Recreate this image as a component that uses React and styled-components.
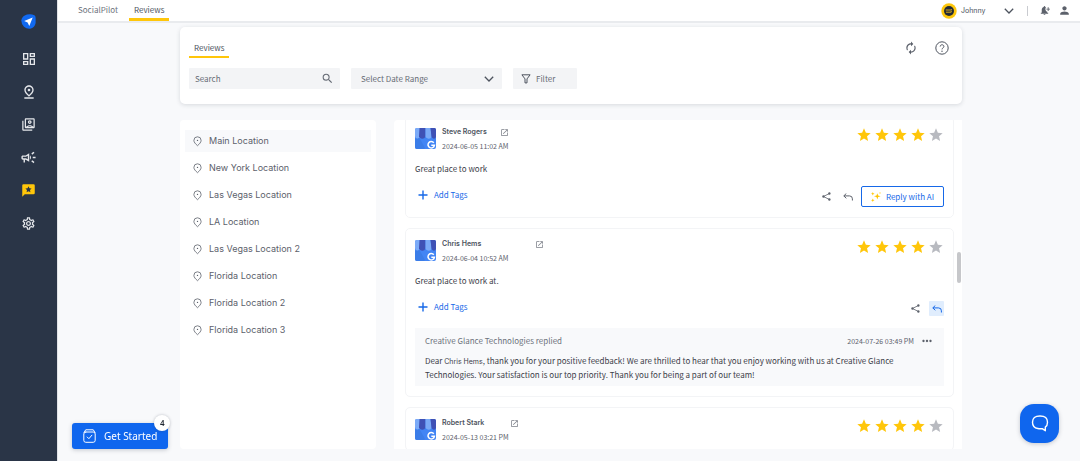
import styled, { createGlobalStyle } from 'styled-components';
import {
  MdOutlineDashboard,
  MdOutlinePinDrop,
  MdOutlineSwitchAccount,
  MdOutlineCampaign,
  MdOutlineSettings,
  MdNotificationAdd,
  MdPerson,
  MdAutorenew,
  MdStar,
  MdMoreHoriz,
  MdOpenInNew,
  MdSearch,
} from 'react-icons/md';

const ReviewsIcon = ({ size }) => (
  <svg width={size} height={size} viewBox="0 0 24 24" aria-hidden="true">
    <path d="M4 2h16q2 0 2 2v12q0 2-2 2H6l-4 4V4q0-2 2-2z" fill="currentColor" />
    <path d="m12 5.200 1.500 3.200 3.500.4-2.600 2.400.7 3.500-3.100-1.700-3.100 1.700.7-3.500L7 8.800l3.500-.4z" fill="#2a3547" />
  </svg>
);

const navItems = [
  { label: 'Dashboard', icon: MdOutlineDashboard, size: 16 },
  { label: 'Locations', icon: MdOutlinePinDrop, size: 16 },
  { label: 'Media', icon: MdOutlineSwitchAccount, size: 15 },
  { label: 'Campaigns', icon: MdOutlineCampaign, size: 17 },
  { label: 'Reviews', icon: ReviewsIcon, size: 15, active: true },
  { label: 'Settings', icon: MdOutlineSettings, size: 15 },
];

const locations = [
  'Main Location',
  'New York Location',
  'Las Vegas Location',
  'LA Location',
  'Las Vegas Location 2',
  'Florida Location',
  'Florida Location 2',
  'Florida Location 3',
];

const reviews = [
  {
    name: 'Steve Rogers',
    nameWidth: 58,
    date: '2024-06-05 11:02 AM',
    text: 'Great place to work',
    rating: 4,
  },
  {
    name: 'Chris Hems',
    nameWidth: 93,
    date: '2024-06-04 10:52 AM',
    text: 'Great place to work at.',
    rating: 4,
    reply: {
      author: 'Creative Glance Technologies replied',
      date: '2024-07-26 03:49 PM',
      text: ', thank you for your positive feedback! We are thrilled to hear that you enjoy working with us at Creative Glance Technologies. Your satisfaction is our top priority. Thank you for being a part of our team!',
    },
  },
  {
    name: 'Robert Stark',
    nameWidth: 68,
    date: '2024-05-13 03:21 PM',
    rating: 4,
  },
];

const BrandIcon = () => (
  <svg width="15" height="15" viewBox="0 0 15 15" aria-hidden="true">
    <path d="M6 .6Q10 -.4 13.400 1.300Q14.600 2 14.600 4V9Q14 13.500 9 14.700Q5.500 15 3 12.800Q.3 10 .3 6.500Q.8 2.300 6 .6Z" fill="#1169f0" />
    <path d="M11.700 3.400 3.200 6.900l3.400 1.500 1.700 3.500z" fill="#fff" />
  </svg>
);

const PinIcon = () => (
  <svg width="9" height="11" viewBox="0 0 9 11" fill="none" stroke="#5c616b" strokeWidth=".8" aria-hidden="true">
    <path d="M4.500 9.700C2.500 7.900.9 6.300.9 4.400a3.600 3.600 0 0 1 7.200 0c0 1.900-1.600 3.500-3.600 5.300Z" />
    <circle cx="4.500" cy="4.400" r=".7" fill="#5c616b" stroke="none" />
  </svg>
);

const ChevronIcon = () => (
  <svg width="10" height="6" viewBox="0 0 10 6" fill="none" stroke="#4d535e" strokeWidth="1.300" aria-hidden="true">
    <path d="M.8.8 5 5 9.200.8" />
  </svg>
);

const FunnelIcon = () => (
  <svg width="10" height="10" viewBox="0 0 10 10" fill="none" stroke="#4d535e" strokeWidth="1" strokeLinejoin="round" aria-hidden="true">
    <path d="M.9.8h8.200L6 4.900v4H4v-4z" />
  </svg>
);

const HelpIcon = () => (
  <svg width="14" height="14" viewBox="0 0 14 14" fill="none" stroke="#4d535e" aria-hidden="true">
    <circle cx="7" cy="7" r="6.200" strokeWidth="1" />
    <path d="M5.200 5.500c0-2.300 3.700-2.300 3.700 0 0 1.400-1.900 1.400-1.900 2.900" strokeWidth="1" />
    <circle cx="7" cy="10.200" r=".7" fill="#4d535e" stroke="none" />
  </svg>
);

const ShareIcon = () => (
  <svg width="9" height="9" viewBox="0 0 10 10" aria-hidden="true">
    <path d="M8.200 1.700 1.600 5l6.600 3.300" fill="none" stroke="currentColor" strokeWidth=".9" />
    <g fill="currentColor">
      <circle cx="8.200" cy="1.700" r="1.300" />
      <circle cx="1.600" cy="5" r="1.300" />
      <circle cx="8.200" cy="8.300" r="1.300" />
    </g>
  </svg>
);

const ReplyIcon = () => (
  <svg width="10" height="8" viewBox="0 0 10 8" fill="none" stroke="currentColor" strokeWidth="1" aria-hidden="true">
    <path d="M3.300.5.8 2.900l2.500 2.400M.9 2.900h5.600q2.900 0 2.900 2.900v1.700" />
  </svg>
);

const PlusIcon = () => (
  <svg width="10" height="10" viewBox="0 0 10 10" stroke="#1668e8" strokeWidth="1.400" aria-hidden="true">
    <path d="M5 .5v9M.5 5h9" />
  </svg>
);

const WandIcon = () => (
  <svg width="10" height="10" viewBox="0 0 10 10" fill="#ffc400" aria-hidden="true">
    <path d="M6.300 1.200 7.100 3.500 9.600 4.300 7.100 5.100 6.300 7.400 5.500 5.100 3 4.300 5.500 3.500z" />
    <path d="M1.800 0l.5 1.200 1.200.5-1.200.5-.5 1.200-.5-1.200L0 1.700l1.300-.5zM1.800 6.500l.5 1.200 1.200.5-1.200.5-.5 1.200-.5-1.200L0 8.200l1.300-.5zM9 0l.3.700.7.300-.7.300L9 2l-.3-.7L8 1l.7-.3z" />
  </svg>
);

const StoreIcon = () => (
  <svg width="21" height="21" viewBox="0 0 21 21" aria-hidden="true">
    <rect width="21" height="21" rx="2" fill="#4285f4" />
    <path d="M0 11 4 9l6 11-1 1H2q-2 0-2-2z" fill="#3b7de8" />
    <path d="M1.500 0H5v8.500Q4 11 2 10.500 0 10 0 8V1.500Q0 0 1.500 0Z" fill="#7baaf7" />
    <path d="M4.500 0H10.500v8.500Q9.500 11 7 10.800 4.700 10.500 4 8.500Z" fill="#3f51b5" />
    <path d="M10.500 0H15.500l1 8.500Q16 11 13.500 10.800 11 10.500 10.500 8.500Z" fill="#7baaf7" />
    <path d="M15.500 0H19.500Q21 0 21 1.500V9Q20.500 10.800 18.800 10.700 17 10.500 16.500 8.500Z" fill="#3f51b5" />
    <path d="M18.800 14.800a3.200 3.200 0 1 0 .6 2.500H16.300" fill="none" stroke="#fff" strokeWidth="1.500" />
  </svg>
);

const BeeIcon = () => (
  <svg width="16" height="16" viewBox="0 0 16 16" aria-hidden="true">
    <circle cx="8" cy="8" r="7.700" fill="#fdc70c" />
    <circle cx="8" cy="8" r="5" fill="#232b36" />
    <path d="M4.800 7h5l1-1M5 9.200h5.200V7.500" fill="none" stroke="#e9b51a" strokeWidth=".9" />
  </svg>
);

const ChecklistIcon = () => (
  <svg width="13" height="14" viewBox="0 0 13 14" fill="none" stroke="#fff" strokeWidth="1" strokeLinecap="round" aria-hidden="true">
    <path d="M1 3.600 2.700.8h7.600L12 3.600" />
    <rect x=".8" y="3" width="11.400" height="10.300" rx="2" />
    <path d="m4.200 8 1.700 1.700 3-3.500" />
  </svg>
);

const ChatIcon = () => (
  <svg width="18" height="17" viewBox="0 0 18 17" fill="none" stroke="#fff" strokeWidth="1.400" strokeLinejoin="round" aria-hidden="true">
    <path d="M9 1Q16.500 1 16.500 7.300 16.500 10.700 14.300 12.200V15.700L11.200 13.600Q9 14 6.800 13.500 1.500 12.800 1.500 7.300 1.500 1 9 1Z" />
  </svg>
);

const ReviewItem = ({ review }) => {
  const { name, nameWidth, date, text, rating, reply } = review;

  return (
    <ReviewCard>
      <ReviewHeader>
        <StoreIcon />
        <ReviewMeta>
          <NameRow>
            <ReviewerName $width={nameWidth}>{name}</ReviewerName>
            <IconLink href="#" aria-label={`Open review by ${name}`}>
              <MdOpenInNew size={9} />
            </IconLink>
          </NameRow>
          <ReviewDate>{date}</ReviewDate>
        </ReviewMeta>
        <Stars role="img" aria-label={`${rating} out of 5 stars`}>
          {[1, 2, 3, 4, 5].map((n) => (
            <MdStar key={n} size={16} color={n <= rating ? '#ffc60a' : '#b8bac0'} />
          ))}
        </Stars>
      </ReviewHeader>
      {text && (
        <>
          <ReviewText>{text}</ReviewText>
          <ReviewActions>
            <AddTags type="button">
              <PlusIcon />
              Add Tags
            </AddTags>
            <ActionGroup>
              <ActionButton type="button" aria-label="Share">
                <ShareIcon />
              </ActionButton>
              <ActionButton type="button" aria-label="Reply" $active={Boolean(reply)}>
                <ReplyIcon />
              </ActionButton>
              {!reply && (
                <AiButton type="button">
                  <WandIcon />
                  Reply with AI
                </AiButton>
              )}
            </ActionGroup>
          </ReviewActions>
        </>
      )}
      {reply && (
        <ReplyBox>
          <ReplyHeader>
            <ReplyAuthor>{reply.author}</ReplyAuthor>
            <ReviewDate>{reply.date}</ReviewDate>
            <ActionButton type="button" aria-label="More">
              <MdMoreHoriz size={14} />
            </ActionButton>
          </ReplyHeader>
          <ReplyText>
            Dear <Mention>{name}</Mention>
            {reply.text}
          </ReplyText>
        </ReplyBox>
      )}
    </ReviewCard>
  );
};

const App = () => {
  return (
    <>
      <GlobalStyle />
      <Layout>
        <Sidebar>
          <SideLink href="#" aria-label="Home">
            <BrandIcon />
          </SideLink>
          {navItems.map(({ label, icon: Icon, size, active }) => (
            <SideLink key={label} href="#" aria-label={label} $active={active}>
              <Icon size={size} />
            </SideLink>
          ))}
        </Sidebar>
        <Page>
          <TopBar>
            <TopNav>
              <TabLink href="#">SocialPilot</TabLink>
              <TabLink href="#" $active>Reviews</TabLink>
            </TopNav>
            <UserArea>
              <UserButton type="button">
                <BeeIcon />
                <UserName>Johnny</UserName>
                <ChevronIcon />
              </UserButton>
              <Divider />
              <ActionButton type="button" aria-label="Notifications">
                <MdNotificationAdd size={11} />
              </ActionButton>
              <ActionButton type="button" aria-label="Account">
                <MdPerson size={13} />
              </ActionButton>
            </UserArea>
          </TopBar>
          <Content>
            <Toolbar>
              <ToolbarHeader>
                <SectionTab href="#">Reviews</SectionTab>
                <ToolbarIcons>
                  <ActionButton type="button" aria-label="Refresh">
                    <MdAutorenew size={14} />
                  </ActionButton>
                  <ActionButton type="button" aria-label="Help">
                    <HelpIcon />
                  </ActionButton>
                </ToolbarIcons>
              </ToolbarHeader>
              <Filters>
                <SearchField>
                  <SearchInput type="text" placeholder="Search" aria-label="Search" />
                  <MdSearch size={13} />
                </SearchField>
                <DateField>
                  <DateSelect aria-label="Date range">
                    <option>Select Date Range</option>
                  </DateSelect>
                  <ChevronIcon />
                </DateField>
                <FilterButton type="button">
                  <FunnelIcon />
                  Filter
                </FilterButton>
              </Filters>
            </Toolbar>
            <Panels>
              <LocationList>
                {locations.map((location, index) => (
                  <li key={location}>
                    <LocationButton type="button" $active={index === 0}>
                      <PinIcon />
                      {location}
                    </LocationButton>
                  </li>
                ))}
              </LocationList>
              <ReviewPanel>
                <ReviewList>
                  {reviews.map((review) => (
                    <ReviewItem key={review.name} review={review} />
                  ))}
                </ReviewList>
                <ScrollThumb />
              </ReviewPanel>
            </Panels>
          </Content>
        </Page>
      </Layout>
      <GetStarted type="button">
        <ChecklistIcon />
        Get Started
        <Badge>4</Badge>
      </GetStarted>
      <ChatButton type="button" aria-label="Open chat">
        <ChatIcon />
      </ChatButton>
    </>
  );
};

const GlobalStyle = createGlobalStyle`
  * {
    box-sizing: border-box;
  }

  body {
    margin: 0;
    background: #f8f9fb;
    color: #4d535e;
    font-family: "Noto Sans CJK SC", "Noto Sans", sans-serif;
    font-size: 8px;
    line-height: 14px;
  }

  button, input, select {
    margin: 0;
    padding: 0;
    border: none;
    background: none;
    color: inherit;
    font: inherit;
  }

  button {
    cursor: pointer;
  }

  a {
    color: inherit;
    text-decoration: none;
  }

  svg {
    display: block;
    flex-shrink: 0;
  }
`;

const Layout = styled.div`
  display: flex;
  height: 100vh;
  overflow: hidden;
`;

const Sidebar = styled.nav`
  display: flex;
  flex-direction: column;
  align-items: center;
  gap: 18px;
  width: 57px;
  flex-shrink: 0;
  padding-top: 14px;
  background: #2a3547;
`;

const SideLink = styled.a`
  display: flex;
  align-items: center;
  height: 15px;
  color: ${props => props.$active ? '#ffc60a' : '#e4e6ea'};

  &:first-child {
    margin-bottom: 4px;
  }
`;

const Page = styled.div`
  display: flex;
  flex: 1;
  flex-direction: column;
  min-width: 0;
  border-left: 1px solid #e1e3e7;
`;

const TopBar = styled.header`
  display: flex;
  justify-content: space-between;
  height: 23px;
  flex-shrink: 0;
  padding: 0 8px 0 15px;
  border-bottom: 2px solid #e9ebee;
  background: #fff;
`;

const TopNav = styled.nav`
  display: flex;
  gap: 6px;
`;

const TabLink = styled.a`
  height: 21px;
  padding: 3px 5px 0;
  border-bottom: 3px solid ${props => props.$active ? '#ffc60a' : 'transparent'};
  color: ${props => props.$active ? '#4d535e' : '#6d727c'};
`;

const UserArea = styled.div`
  display: flex;
  align-items: center;
  gap: 5px;
`;

const UserButton = styled.button`
  display: flex;
  align-items: center;
  gap: 4px;
`;

const UserName = styled.span`
  width: 39px;
  font-family: Inter, sans-serif;
  font-size: 7px;
  text-align: left;
`;

const Divider = styled.span`
  width: 1px;
  height: 10px;
  margin: 0 4px 0 8px;
  background: #c9cbd0;
`;

const Content = styled.main`
  display: flex;
  flex: 1;
  flex-direction: column;
  gap: 16px;
  min-height: 0;
  padding: 4px 118px 12px 122px;
`;

const Toolbar = styled.section`
  padding: 12px 9px 15px;
  border-radius: 5px;
  background: #fff;
  box-shadow: 0 1px 4px rgba(42, 53, 71, 0.16);
`;

const ToolbarHeader = styled.div`
  display: flex;
  justify-content: space-between;
  margin-bottom: 10px;
`;

const SectionTab = styled.a`
  height: 19px;
  padding: 2px 5px 0;
  border-bottom: 2px solid #ffc60a;
`;

const ToolbarIcons = styled.div`
  display: flex;
  align-items: center;
  gap: 16px;
  padding: 0 4px 2px 0;
`;

const Filters = styled.div`
  display: flex;
  gap: 11px;
  color: #666b75;
`;

const Field = styled.div`
  display: flex;
  align-items: center;
  width: 151px;
  height: 21px;
  border-radius: 1px;
  background: #f3f4f6;
`;

const SearchField = styled(Field)`
  padding: 0 6px;
`;

const SearchInput = styled.input`
  flex: 1;
  min-width: 0;
  outline: none;

  &::placeholder {
    color: #666b75;
    opacity: 1;
  }
`;

const DateField = styled(Field)`
  padding: 0 8px 0 10px;
`;

const DateSelect = styled.select`
  flex: 1;
  min-width: 0;
  appearance: none;
  outline: none;
`;

const FilterButton = styled.button`
  display: flex;
  align-items: center;
  gap: 5px;
  width: 64px;
  height: 21px;
  padding: 0 8px;
  border-radius: 1px;
  background: #f3f4f6;
`;

const Panels = styled.div`
  display: flex;
  flex: 1;
  gap: 18px;
  min-height: 0;
`;

const LocationList = styled.ul`
  display: flex;
  flex-direction: column;
  gap: 5px;
  width: 196px;
  flex-shrink: 0;
  margin: 0;
  padding: 10px 5px;
  border-radius: 4px;
  background: #fff;
  list-style: none;
`;

const LocationButton = styled.button`
  display: flex;
  align-items: center;
  gap: 7px;
  width: 100%;
  height: 22px;
  padding: 0 8px;
  background: ${props => props.$active ? '#f8f9fb' : 'transparent'};
  color: #5c616b;
  font-family: Inter, sans-serif;
  font-size: 9px;
`;

const ReviewPanel = styled.section`
  position: relative;
  flex: 1;
  min-width: 0;
  overflow: hidden;
  border-radius: 4px 0 0 0;
  background: #fff;
`;

const ReviewList = styled.div`
  display: flex;
  flex-direction: column;
  gap: 10px;
  margin-top: -4px;
  padding: 0 8px 0 11px;
`;

const ScrollThumb = styled.div`
  position: absolute;
  top: 40%;
  right: 1px;
  width: 4px;
  height: 31px;
  border-radius: 2px;
  background: #c6c7ca;
`;

const ReviewCard = styled.article`
  padding: 11px 9px 10px;
  border: 1px solid #f3f4f6;
  border-radius: 5px;
`;

const ReviewHeader = styled.div`
  display: flex;
  gap: 6px;
  height: 21px;
`;

const ReviewMeta = styled.div`
  flex: 1;
  margin-top: -3px;
`;

const NameRow = styled.div`
  display: flex;
  align-items: center;
`;

const ReviewerName = styled.strong`
  width: ${props => props.$width}px;
  font-family: Inter, sans-serif;
  font-size: 7px;
  font-weight: 600;
`;

const IconLink = styled.a`
  color: #7b7f88;
`;

const ReviewDate = styled.time`
  display: block;
  color: #5c616b;
  font-size: 7px;
`;

const Stars = styled.div`
  display: flex;
  gap: 2px;
  margin-top: -1px;
`;

const ReviewText = styled.p`
  margin: 13px 0 10px;
  color: #3c4049;
`;

const ReviewActions = styled.div`
  display: flex;
  align-items: center;
  justify-content: space-between;
  height: 21px;
`;

const AddTags = styled.button`
  display: flex;
  align-items: center;
  align-self: flex-start;
  gap: 6px;
  height: 18px;
  padding-left: 3px;
  color: #1668e8;
`;

const ActionGroup = styled.div`
  display: flex;
  align-items: center;
  gap: 6px;
`;

const ActionButton = styled.button`
  display: flex;
  align-items: center;
  justify-content: center;
  min-width: 15px;
  height: 15px;
  border-radius: 1px;
  background: ${props => props.$active ? '#e0edfd' : 'transparent'};
  color: ${props => props.$active ? '#1668e8' : '#5c616b'};
`;

const AiButton = styled.button`
  display: flex;
  align-items: center;
  justify-content: center;
  gap: 5px;
  width: 83px;
  height: 21px;
  border: 1px solid #1668e8;
  border-radius: 2px;
  color: #1668e8;
`;

const ReplyBox = styled.div`
  margin-top: 9px;
  padding: 6px 10px 4px;
  background: #f8f9fb;
`;

const ReplyHeader = styled.div`
  display: flex;
  align-items: center;
  gap: 5px;
  height: 14px;
  margin-bottom: 6px;
`;

const ReplyAuthor = styled.span`
  flex: 1;
  color: #6d727c;
`;

const ReplyText = styled.p`
  margin: 0;
  padding-right: 20px;
  color: #3c4049;
`;

const Mention = styled.span`
  font-family: Inter, sans-serif;
  font-size: 7px;
  line-height: 1;
`;

const GetStarted = styled.button`
  position: fixed;
  bottom: 12px;
  left: 72px;
  display: flex;
  align-items: center;
  gap: 8px;
  height: 26px;
  padding: 0 11px;
  border-radius: 3px;
  background: #0f66ee;
  box-shadow: 0 1px 4px rgba(42, 53, 71, 0.25);
  color: #fff;
  font-family: "Noto Sans", sans-serif;
  font-size: 10px;
`;

const Badge = styled.span`
  position: absolute;
  top: -8px;
  right: -2px;
  width: 16px;
  height: 16px;
  border-radius: 50%;
  background: #fff;
  box-shadow: 0 0 3px rgba(42, 53, 71, 0.3);
  color: #1f2630;
  font-size: 8px;
  font-weight: 600;
  line-height: 16px;
`;

const ChatButton = styled.button`
  position: fixed;
  right: 21px;
  bottom: 18px;
  display: flex;
  align-items: center;
  justify-content: center;
  width: 39px;
  height: 39px;
  border-radius: 14px;
  background: #0f66ee;
  box-shadow: 0 1px 4px rgba(42, 53, 71, 0.25);
`;

export default App;
